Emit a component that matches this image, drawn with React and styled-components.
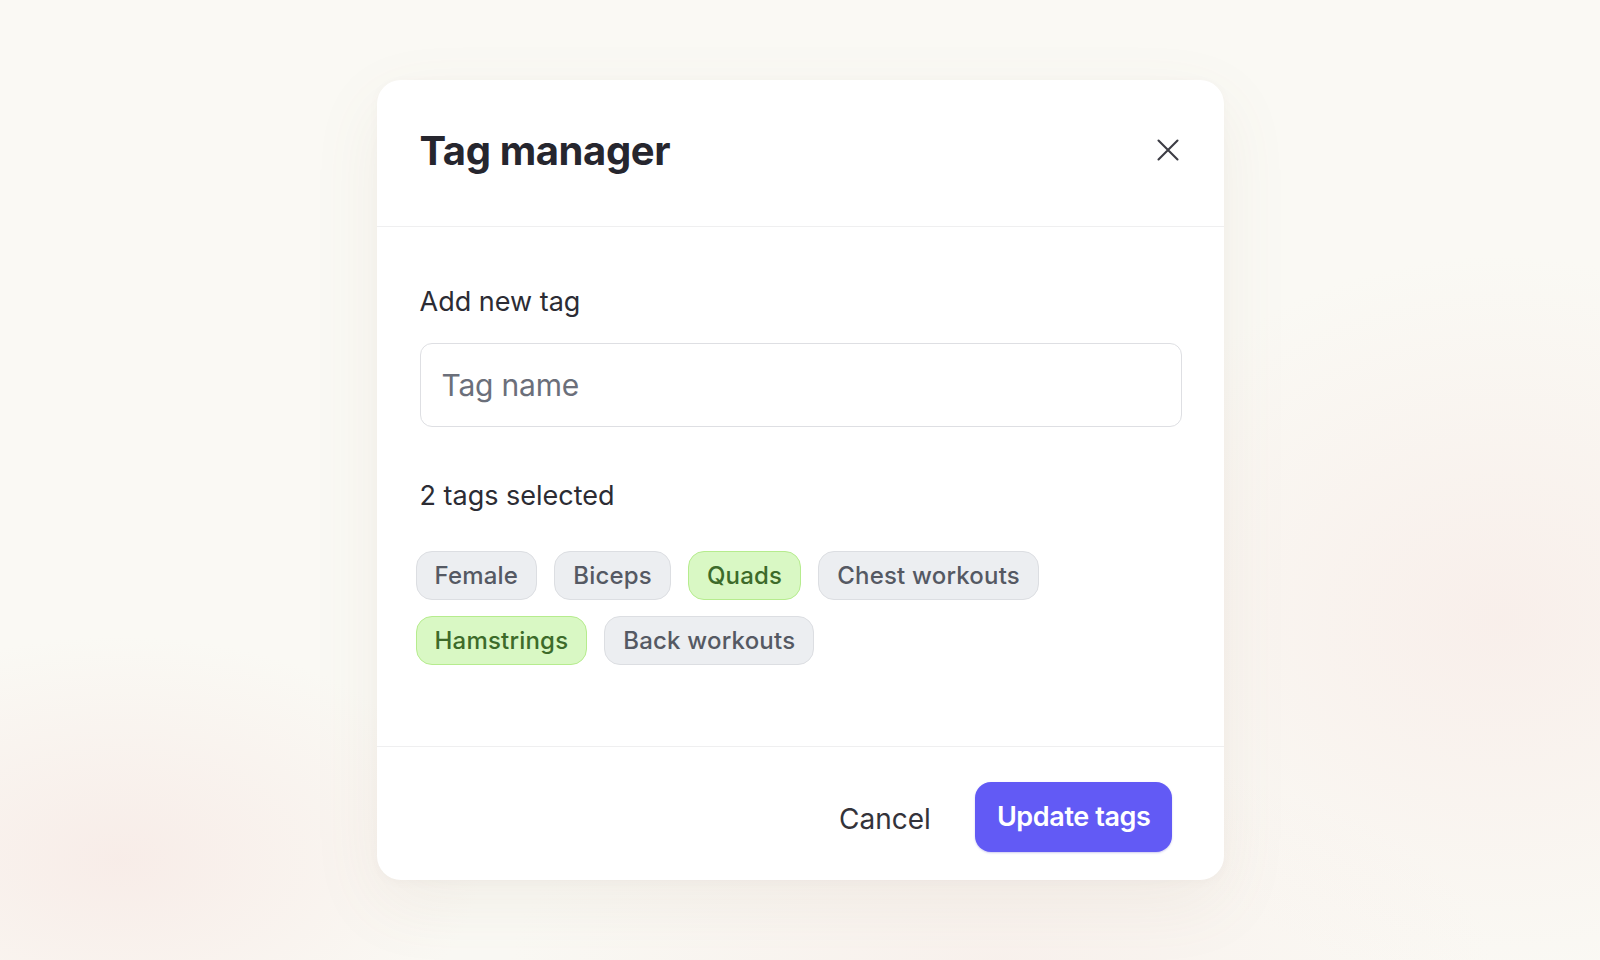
import React from "react";
import styled, { createGlobalStyle } from "styled-components";

const Global = createGlobalStyle`
  html, body { margin: 0; padding: 0; }
  body {
    font-family: "Inter", "Noto Sans", sans-serif;
    -webkit-font-smoothing: antialiased;
  }
  * { box-sizing: border-box; }
`;

const Page = styled.div`
  width: 1600px;
  height: 960px;
  display: flex;
  align-items: center;
  justify-content: center;
  background:
    radial-gradient(ellipse 520px 320px at 120px 860px, rgba(246, 228, 224, 0.6), rgba(246, 228, 224, 0) 70%),
    radial-gradient(ellipse 620px 520px at 1500px 620px, rgba(247, 232, 228, 0.6), rgba(247, 232, 228, 0) 70%),
    radial-gradient(ellipse 700px 300px at 1000px 960px, rgba(247, 234, 230, 0.5), rgba(247, 234, 230, 0) 70%),
    #faf9f4;
`;

const Modal = styled.div`
  width: 847px;
  height: 800px;
  background: #ffffff;
  border-radius: 24px;
  box-shadow: 0 24px 70px rgba(140, 110, 90, 0.08), 0 2px 10px rgba(140, 110, 90, 0.04);
  display: flex;
  flex-direction: column;
  overflow: hidden;
`;

const Header = styled.div`
  height: 147px;
  flex: none;
  display: flex;
  align-items: center;
  justify-content: space-between;
  padding: 0 45px 6px 43px;
  border-bottom: 1.5px solid #efeff0;
`;

const Title = styled.h1`
  margin: 0;
  font-size: 40px;
  font-weight: 700;
  color: #26262e;
  letter-spacing: -0.4px;
`;

const CloseButton = styled.button`
  border: none;
  background: none;
  padding: 0;
  width: 22px;
  height: 22px;
  display: flex;
  align-items: center;
  justify-content: center;
  color: #3c3c44;
  cursor: pointer;
`;

const Body = styled.div`
  flex: 1;
  display: flex;
  flex-direction: column;
  padding: 59px 42px 0 43px;
`;

const Label = styled.div`
  font-size: 27px;
  line-height: 32px;
  color: #2c2c34;
  font-weight: 400;
  letter-spacing: 0;
  margin-top: ${(p) => p.$mt || 0}px;
`;

const Input = styled.input`
  margin-top: 25px;
  width: 100%;
  height: 84px;
  border: 1.5px solid #dedfe3;
  border-radius: 12px;
  padding: 0 21px;
  font-family: inherit;
  font-size: 30px;
  color: #2c2c34;
  outline: none;
  letter-spacing: -0.2px;
  &::placeholder { color: #6b6f7a; }
`;

const TagList = styled.div`
  margin: 39px 0 0 -4px;
  display: flex;
  flex-wrap: wrap;
  column-gap: 17px;
  row-gap: 16px;
`;

const Tag = styled.button`
  height: 49px;
  padding: 0 18px;
  border-radius: 16px;
  font-family: inherit;
  font-size: 24px;
  font-weight: 500;
  letter-spacing: 0.2px;
  cursor: pointer;
  border: 1.5px solid ${(p) => (p.$selected ? "#b6ec8e" : "#dcdee2")};
  background: ${(p) => (p.$selected ? "#d9f8c4" : "#eceef1")};
  color: ${(p) => (p.$selected ? "#3d6b2a" : "#555963")};
`;

const Footer = styled.div`
  height: 134px;
  flex: none;
  border-top: 1.5px solid #efeff0;
  display: flex;
  align-items: center;
  justify-content: flex-end;
  gap: 44px;
  padding: 6px 52px 0 0;
`;

const CancelButton = styled.button`
  border: none;
  background: none;
  padding: 4px 0 0;
  font-family: inherit;
  font-size: 28px;
  color: #33333a;
  cursor: pointer;
  letter-spacing: 0;
`;

const PrimaryButton = styled.button`
  height: 70px;
  padding: 0 21px 0 22px;
  border: none;
  border-radius: 16px;
  background: #625af5;
  color: #ffffff;
  font-family: inherit;
  font-size: 27px;
  font-weight: 600;
  letter-spacing: -0.4px;
  cursor: pointer;
  box-shadow: 0 1px 2px rgba(60, 50, 200, 0.25);
`;

const tags = [
  { name: "Female", selected: false },
  { name: "Biceps", selected: false },
  { name: "Quads", selected: true },
  { name: "Chest workouts", selected: false },
  { name: "Hamstrings", selected: true },
  { name: "Back workouts", selected: false },
];

const CloseIcon = () => (
  <svg width="22" height="22" viewBox="0 0 22 22" fill="none" stroke="currentColor" strokeWidth="2.1" strokeLinecap="round">
    <path d="M1.5 1.5 20.5 20.5M20.5 1.5 1.5 20.5" />
  </svg>
);

export default function App() {
  const selectedCount = tags.filter((t) => t.selected).length;
  return (
    <>
      <Global />
      <Page>
        <Modal>
          <Header>
            <Title>Tag manager</Title>
            <CloseButton aria-label="Close">
              <CloseIcon />
            </CloseButton>
          </Header>
          <Body>
            <Label>Add new tag</Label>
            <Input placeholder="Tag name" />
            <Label $mt={53}>{selectedCount} tags selected</Label>
            <TagList>
              {tags.map((t) => (
                <Tag key={t.name} $selected={t.selected}>
                  {t.name}
                </Tag>
              ))}
            </TagList>
          </Body>
          <Footer>
            <CancelButton>Cancel</CancelButton>
            <PrimaryButton>Update tags</PrimaryButton>
          </Footer>
        </Modal>
      </Page>
    </>
  );
}
